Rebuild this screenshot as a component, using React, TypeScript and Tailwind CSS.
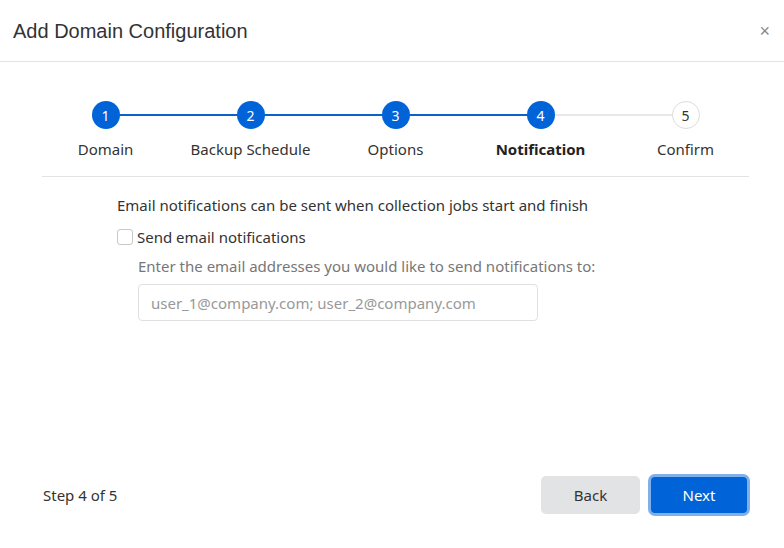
import React, { useState } from "react";

const steps = ["Domain", "Backup Schedule", "Options", "Notification", "Confirm"];
const current = 4;

export default function App() {
  const [sendEmail, setSendEmail] = useState(false);

  return (
    <div
      className="w-[784px] h-[548px] bg-white text-[#333] flex flex-col"
      style={{ fontFamily: '"Noto Sans", "Open Sans", sans-serif' }}
    >
      {/* Header */}
      <div className="h-[62px] flex items-center justify-between pl-[13px] pr-[14px] border-b border-[#e3e3e3] shrink-0">
        <h1
          className="text-[20px] text-[#333] leading-none"
          style={{ fontFamily: '"Liberation Sans", Arial, sans-serif' }}
        >
          Add Domain Configuration
        </h1>
        <button className="text-[#888] text-[18px] leading-none" style={{ fontFamily: '"Liberation Sans", Arial, sans-serif' }}>
          ×
        </button>
      </div>

      {/* Stepper */}
      <div className="ml-[42px] mr-[35px] border-b border-[#e3e3e3] pt-[39px] pb-[17px]">
        <div className="grid grid-cols-5 w-[725px] -ml-[9px]">
          {steps.map((label, i) => {
            const n = i + 1;
            const done = n <= current;
            return (
              <div key={label} className="relative flex flex-col items-center">
                {i > 0 && (
                  <div
                    className={`absolute top-[13px] right-1/2 w-full h-[2px] ${
                      n <= current ? "bg-[#0a62c8]" : "bg-[#e8e8e8]"
                    }`}
                  />
                )}
                <div
                  className={`relative z-10 w-[28px] h-[28px] rounded-full flex items-center justify-center text-[14px] ${
                    done
                      ? "bg-[#0064d8] text-white"
                      : "bg-white border border-[#dcdcdc] text-[#333]"
                  }`}
                >
                  {n}
                </div>
                <div
                  className={`mt-[10px] text-[15px] leading-[20px] ${
                    n === current ? "font-bold text-[#222]" : "text-[#333]"
                  }`}
                >
                  {label}
                </div>
              </div>
            );
          })}
        </div>
      </div>

      {/* Content */}
      <div className="flex-1 pl-[117px] pt-[18px]">
        <p className="text-[15px] leading-[20px] text-[#333]">
          Email notifications can be sent when collection jobs start and finish
        </p>
        <label className="mt-[12px] flex items-center gap-[4px] cursor-pointer">
          <input
            type="checkbox"
            checked={sendEmail}
            onChange={(e) => setSendEmail(e.target.checked)}
            className="appearance-none w-[16px] h-[16px] rounded-[3px] border border-[#c8c8c8] bg-white checked:bg-[#0064d8]"
          />
          <span className="text-[15px] leading-[20px] text-[#333]">Send email notifications</span>
        </label>
        <div className="pl-[21px]">
          <p className="mt-[9px] text-[15px] leading-[20px] text-[#777]">
            Enter the email addresses you would like to send notifications to:
          </p>
          <input
            type="text"
            placeholder="user_1@company.com; user_2@company.com"
            className="mt-[8px] w-[400px] h-[37px] px-[12px] rounded-[4px] border border-[#e0e0e0] text-[15px] text-[#333] placeholder:text-[#999] focus:outline-none"
          />
        </div>
      </div>

      {/* Footer */}
      <div className="h-[84px] shrink-0 flex items-center justify-between pl-[43px] pr-[34px] pb-[22px]">
        <span className="text-[15px] leading-[20px] text-[#333]">Step 4 of 5</span>
        <div className="flex items-center gap-[8px]">
          <button className="w-[99px] h-[38px] rounded-[5px] bg-[#e2e3e4] text-[15px] text-[#333]">
            Back
          </button>
          <button className="w-[102px] h-[42px] rounded-[7px] bg-[#0064d8] text-white text-[15px] border-[3px] border-[#7fb0ea]">
            Next
          </button>
        </div>
      </div>
    </div>
  );
}
